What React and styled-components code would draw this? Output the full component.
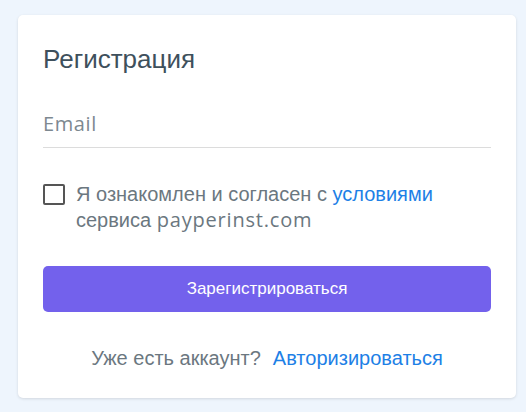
import React from 'react'
import styled, { createGlobalStyle } from 'styled-components'

const GlobalStyle = createGlobalStyle`
  html, body {
    margin: 0;
    padding: 0;
    background: #eef5fd;
  }
  body {
    font-family: "Liberation Sans", Arial, sans-serif;
  }
`

const Page = styled.div`
  padding: 15px 10px 15px 18px;
`

const Card = styled.div`
  width: 498px;
  box-sizing: border-box;
  background: #fff;
  border-radius: 5px;
  box-shadow: 0 1px 3px rgba(0, 0, 0, 0.12);
  padding: 28px 25px 28px;
`

const Title = styled.h2`
  margin: 0;
  font-size: 26px;
  font-weight: 400;
  line-height: 32px;
  color: #3e505c;
`

const Field = styled.div`
  margin-top: 37px;
  border-bottom: 1px solid #dcdcdc;
  padding-bottom: 11px;
`

const Input = styled.input`
  display: block;
  width: 100%;
  border: 0;
  outline: none;
  padding: 0;
  font-family: "Open Sans", sans-serif;
  font-size: 20px;
  letter-spacing: 0.6px;
  line-height: 24px;
  height: 24px;
  color: #3e505c;
  &::placeholder {
    color: #7d8890;
  }
`

const Agree = styled.label`
  display: flex;
  align-items: flex-start;
  gap: 11px;
  margin-top: 34px;
  font-size: 20px;
  line-height: 25px;
  color: #6b7780;
`

const Box = styled.span`
  flex: none;
  width: 22px;
  height: 21px;
  box-sizing: border-box;
  border: 2px solid #555;
  border-radius: 2px;
  margin-top: 2px;
`

const Link = styled.a`
  color: ${props => props.blue ? '#1d80e6' : 'inherit'};
  text-decoration: none;
`

const Latin = styled.span`
  font-family: "Open Sans", sans-serif;
  letter-spacing: 0.8px;
`

const Button = styled.button`
  display: block;
  width: 100%;
  height: 46px;
  margin-top: 33px;
  border: 0;
  border-radius: 5px;
  background: #7361ec;
  color: #fff;
  font-family: "Liberation Sans", Arial, sans-serif;
  font-size: 17px;
`

const Footer = styled.div`
  display: flex;
  justify-content: center;
  gap: 12px;
  margin-top: 34px;
  font-size: 20px;
  line-height: 24px;
  color: #6b7780;
`

export default function App () {
  return (
    <Page>
      <GlobalStyle />
      <Card>
        <Title>Регистрация</Title>
        <Field>
          <Input type='email' placeholder='Email' />
        </Field>
        <Agree>
          <Box />
          <span>
            Я ознакомлен и согласен с <Link blue href='#'>условиями</Link>
            <br />
            сервиса <Latin>payperinst.com</Latin>
          </span>
        </Agree>
        <Button>Зарегистрироваться</Button>
        <Footer>
          <span>Уже есть аккаунт?</span>
          <Link blue href='#'>Авторизироваться</Link>
        </Footer>
      </Card>
    </Page>
  )
}
